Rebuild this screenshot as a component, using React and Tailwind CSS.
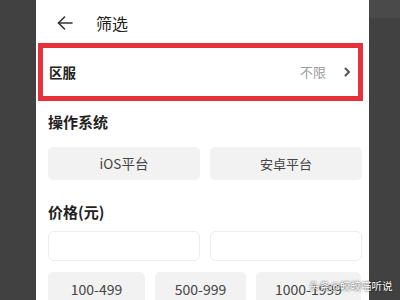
const PRICES = [
  { label: '100-499', w: 'w-[97px]' },
  { label: '500-999', w: 'w-[91px]' },
  { label: '1000-1999', w: 'w-[105px]' },
]

function BackArrow() {
  return (
    <svg width="16" height="14" viewBox="0 0 16 14" fill="none" stroke="#333" strokeWidth="1.6" strokeLinecap="round" strokeLinejoin="round">
      <path d="M15 7H1.5" />
      <path d="M7.5 1L1.5 7l6 6" />
    </svg>
  )
}

export default function App() {
  return (
    <div
      className="relative flex h-[300px] w-[400px] overflow-hidden bg-[#414141]"
      style={{ fontFamily: '"Noto Sans CJK SC", "Noto Sans", sans-serif' }}
    >
      <div className="w-[36px] shrink-0 bg-[#414141]" />

      <div className="flex w-[333px] shrink-0 flex-col bg-white">
        <div className="flex h-[43px] shrink-0 items-center pt-[3px]">
          <div className="ml-[21px] flex w-[16px] items-center">
            <BackArrow />
          </div>
          <span className="ml-[23px] text-[16px] leading-none text-[#222]">筛选</span>
        </div>

        <div className="ml-[2px] flex h-[58px] w-[325px] shrink-0 items-center justify-between border-[5px] border-[#e5323b] pl-[6px] pr-[7px]">
          <span className="text-[13.5px] font-bold text-[#222]">区服</span>
          <div className="flex items-center gap-[18px]">
            <span className="text-[13px] text-[#9a9a9a]">不限</span>
            <svg width="7" height="10" viewBox="0 0 7 10" fill="none" stroke="#555" strokeWidth="2" strokeLinecap="round" strokeLinejoin="round">
              <path d="M1.5 1.5L5 5l-3.5 3.5" />
            </svg>
          </div>
        </div>

        <div className="ml-[12px] mt-[11px] text-[15px] font-bold leading-[20px] text-[#222]">操作系统</div>

        <div className="ml-[12px] mt-[15px] flex gap-[10px]">
          <div className="flex h-[33px] w-[152px] items-center justify-center rounded-[5px] bg-[#f2f2f2] text-[13.5px] text-[#444]">
            iOS平台
          </div>
          <div className="flex h-[33px] w-[152px] items-center justify-center rounded-[5px] bg-[#f2f2f2] text-[13px] text-[#444]">
            安卓平台
          </div>
        </div>

        <div className="ml-[12px] mt-[22px] text-[15px] font-bold leading-[20px] text-[#222]">价格(元)</div>

        <div className="ml-[12px] mt-[9px] flex gap-[10px]">
          <div className="h-[30px] w-[152px] rounded-[6px] border border-[#ededed] bg-white" />
          <div className="h-[30px] w-[152px] rounded-[6px] border border-[#ededed] bg-white" />
        </div>

        <div className="ml-[12px] mt-[11px] flex gap-[10px]">
          {PRICES.map((item) => (
            <div
              key={item.label}
              className={`flex h-[34px] shrink-0 items-center justify-center rounded-[5px] bg-[#f2f2f2] text-[14px] text-[#444] ${item.w}`}
            >
              {item.label}
            </div>
          ))}
        </div>
      </div>

      <div className="flex flex-1 flex-col bg-[#414141]">
        <div className="h-[18px] bg-[#4a4a4a]" />
      </div>

      <span
        className="absolute left-[309px] top-[278px] whitespace-nowrap text-[10.5px] leading-[16px] text-white"
        style={{ textShadow: '0 0 2px rgba(0,0,0,0.9)' }}
      >
        头条@皎皎喵听说
      </span>
    </div>
  )
}
